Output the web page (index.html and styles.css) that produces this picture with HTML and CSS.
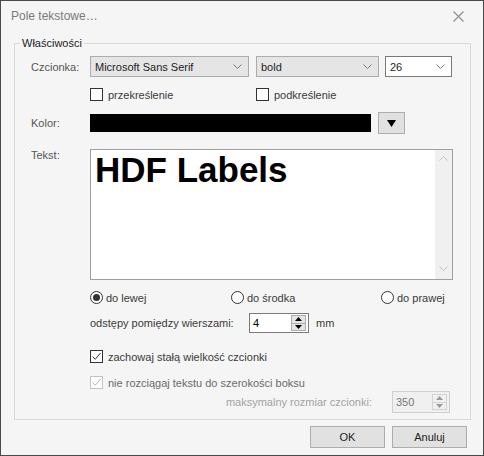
FILE: index.html
```html
<!DOCTYPE html>
<html lang="pl">
<head>
    <meta charset="UTF-8">
    <title>Pole tekstowe</title>
    <link rel="stylesheet" href="styles.css">
</head>
<body>
    <div class="dialog">
        <div class="titlebar">
            <span class="title">Pole tekstowe…</span>
            <svg class="close" width="11" height="11" viewBox="0 0 11 11">
                <path d="M0.5 0.5L10.5 10.5M10.5 0.5L0.5 10.5" stroke="#8c8c8c" stroke-width="1.1" fill="none"/>
            </svg>
        </div>

        <fieldset class="group">
            <legend>Właściwości</legend>

            <div class="row rowFont">
                <span class="label">Czcionka:</span>
                <div class="combo comboFamily">
                    <span>Microsoft Sans Serif</span>
                    <svg width="9" height="5" viewBox="0 0 9 5"><path d="M0.5 0.5L4.5 4.5L8.5 0.5" stroke="#7a7a7a" fill="none"/></svg>
                </div>
                <div class="combo comboStyle">
                    <span>bold</span>
                    <svg width="9" height="5" viewBox="0 0 9 5"><path d="M0.5 0.5L4.5 4.5L8.5 0.5" stroke="#7a7a7a" fill="none"/></svg>
                </div>
                <div class="combo comboSize">
                    <span>26</span>
                    <svg width="9" height="5" viewBox="0 0 9 5"><path d="M0.5 0.5L4.5 4.5L8.5 0.5" stroke="#7a7a7a" fill="none"/></svg>
                </div>
            </div>

            <div class="row rowDecor indent">
                <label class="check strike"><span class="box"></span>przekreślenie</label>
                <label class="check"><span class="box"></span>podkreślenie</label>
            </div>

            <div class="row rowColor">
                <span class="label">Kolor:</span>
                <div class="swatch"></div>
                <div class="colorBtn">
                    <svg width="9" height="7" viewBox="0 0 9 7"><path d="M0 0H9L4.5 7Z" fill="#000"/></svg>
                </div>
            </div>

            <div class="row rowText">
                <span class="label">Tekst:</span>
                <div class="textbox">
                    <div class="textContent">HDF Labels</div>
                    <div class="scrollbar">
                        <svg width="9" height="5" viewBox="0 0 9 5"><path d="M0.5 4.5L4.5 0.5L8.5 4.5" stroke="#c4c4c4" fill="none"/></svg>
                        <svg width="9" height="5" viewBox="0 0 9 5"><path d="M0.5 0.5L4.5 4.5L8.5 0.5" stroke="#c4c4c4" fill="none"/></svg>
                    </div>
                </div>
            </div>

            <div class="row rowAlign indent">
                <label class="option left"><span class="radio checked"></span>do lewej</label>
                <label class="option center"><span class="radio"></span>do środka</label>
                <label class="option"><span class="radio"></span>do prawej</label>
            </div>

            <div class="row rowSpacing indent">
                <span class="spacingLabel">odstępy pomiędzy wierszami:</span>
                <div class="spin">
                    <span>4</span>
                    <span class="spinBtns">
                        <span class="spinBtn"><svg width="7" height="4" viewBox="0 0 7 4"><path d="M0 4H7L3.5 0Z" fill="#000"/></svg></span>
                        <span class="spinBtn"><svg width="7" height="4" viewBox="0 0 7 4"><path d="M0 0H7L3.5 4Z" fill="#000"/></svg></span>
                    </span>
                </div>
                <span class="unit">mm</span>
            </div>

            <div class="row rowKeep indent">
                <label class="check">
                    <span class="box">
                        <svg width="11" height="11" viewBox="0 0 11 11"><path d="M1.5 5.5L4.2 8.3L9.5 2" stroke="#333" stroke-width="1" fill="none"/></svg>
                    </span>zachowaj stałą wielkość czcionki
                </label>
            </div>

            <div class="row rowStretch indent">
                <label class="check disabled">
                    <span class="box">
                        <svg width="11" height="11" viewBox="0 0 11 11"><path d="M1.5 5.5L4.2 8.3L9.5 2" stroke="#b5b5b5" stroke-width="1" fill="none"/></svg>
                    </span>nie rozciągaj tekstu do szerokości boksu
                </label>
            </div>

            <div class="row rowMax">
                <span class="maxLabel">maksymalny rozmiar czcionki:</span>
                <div class="spin spinDisabled">
                    <span>350</span>
                    <span class="spinBtns">
                        <span class="spinBtn"><svg width="7" height="4" viewBox="0 0 7 4"><path d="M0 4H7L3.5 0Z" fill="#9a9a9a"/></svg></span>
                        <span class="spinBtn"><svg width="7" height="4" viewBox="0 0 7 4"><path d="M0 0H7L3.5 4Z" fill="#9a9a9a"/></svg></span>
                    </span>
                </div>
            </div>
        </fieldset>

        <div class="actions">
            <button>OK</button>
            <button>Anuluj</button>
        </div>
    </div>
</body>
</html>
```

FILE: styles.css
```css
* {
    box-sizing: border-box;
}

body {
    margin: 0;
    font-family: "Liberation Sans", Arial, sans-serif;
    font-size: 11px;
    color: #3a3a3a;
}

.dialog {
    width: 484px;
    height: 456px;
    border: 1px solid #4a4a4a;
    background-color: #f5f5f5;
    display: flex;
    flex-direction: column;
}

.titlebar {
    height: 30px;
    display: flex;
    align-items: center;
    justify-content: space-between;
    padding: 0 19px 0 10px;
}

.title {
    font-size: 12px;
    color: #7a7a7a;
}

.group {
    margin: 5px 12px 0 13px;
    padding: 6px 17px 6px 16px;
    border: 1px solid #d9d9d9;
    min-width: 0;
}

.group legend {
    padding: 0 2px;
    margin-left: -11px;
    line-height: 14px;
    color: #222;
}

.row {
    display: flex;
    align-items: center;
}

.indent {
    padding-left: 59px;
}

.label {
    width: 59px;
    flex: none;
    color: #555;
}

/* font row */
.rowFont {
    height: 21px;
}

.combo {
    height: 21px;
    border: 1px solid #acacac;
    background-color: #e5e5e5;
    display: flex;
    align-items: center;
    justify-content: space-between;
    padding: 0 6px 0 4px;
    color: #1e1e1e;
}

.comboFamily {
    width: 159px;
    margin-right: 7px;
}

.comboStyle {
    width: 123px;
    margin-right: 6px;
}

.comboSize {
    width: 67px;
    background-color: #fff;
    border-color: #7a7a7a;
}

/* checkboxes */
.check {
    display: flex;
    align-items: center;
    gap: 5px;
    height: 13px;
}

.box {
    width: 13px;
    height: 13px;
    flex: none;
    border: 1px solid #333;
    background-color: #fff;
    display: flex;
}

.rowDecor {
    margin-top: 11px;
}

.strike {
    width: 166px;
}

.disabled {
    color: #6a6a6a;
}

.disabled .box {
    border-color: #c4c4c4;
}

/* colour row */
.rowColor {
    margin-top: 11px;
    height: 22px;
}

.swatch {
    width: 281px;
    height: 18px;
    background-color: #000;
}

.colorBtn {
    width: 27px;
    height: 22px;
    margin-left: 7px;
    background-color: #e1e1e1;
    border: 1px solid #adadad;
    display: flex;
    align-items: center;
    justify-content: center;
}

/* text box */
.rowText {
    margin-top: 15px;
    align-items: flex-start;
}

.rowText .label {
    line-height: 13px;
}

.textbox {
    width: 363px;
    height: 131px;
    border: 1px solid #a0a0a0;
    background-color: #fff;
    display: flex;
}

.textContent {
    flex: 1;
    padding: 0 4px;
    font-family: "Liberation Sans", Arial, sans-serif;
    font-weight: bold;
    font-size: 35px;
    line-height: 40px;
    color: #000;
}

.scrollbar {
    width: 17px;
    background-color: #f0f0f0;
    display: flex;
    flex-direction: column;
    justify-content: space-between;
    align-items: center;
    padding: 6px 0 8px;
}

/* alignment radios */
.rowAlign {
    margin-top: 11px;
    height: 13px;
}

.option {
    display: flex;
    align-items: center;
    gap: 3px;
}

.option.left {
    width: 141px;
}

.option.center {
    width: 150px;
}

.radio {
    width: 13px;
    height: 13px;
    border-radius: 50%;
    border: 1px solid #333;
    background-color: #fff;
    padding: 2px;
}

.radio.checked::after {
    content: "";
    display: block;
    width: 7px;
    height: 7px;
    border-radius: 50%;
    background-color: #333;
}

/* line spacing */
.rowSpacing {
    margin-top: 9px;
    height: 20px;
}

.spacingLabel {
    width: 159px;
}

.spin {
    width: 60px;
    height: 20px;
    border: 1px solid #7a7a7a;
    background-color: #fff;
    display: flex;
    align-items: center;
    justify-content: space-between;
    padding: 0 2px 0 3px;
    color: #000;
}

.spinBtns {
    width: 15px;
    height: 16px;
    border: 1px solid #acacac;
    display: flex;
    flex-direction: column;
}

.spinBtn {
    flex: 1;
    background-color: #e5e5e5;
    display: flex;
    align-items: center;
    justify-content: center;
}

.spinBtn + .spinBtn {
    border-top: 1px solid #acacac;
}

.unit {
    margin-left: 7px;
}

.rowKeep {
    margin-top: 17px;
}

.rowStretch {
    margin-top: 13px;
}

/* max size */
.rowMax {
    margin-top: 2px;
    height: 22px;
    justify-content: flex-end;
}

.maxLabel {
    color: #a3a3a3;
    margin-right: 20px;
}

.spinDisabled {
    width: 58px;
    height: 22px;
    margin-right: 3px;
    border-color: #cfcfcf;
    background-color: #f0f0f0;
    color: #777;
}

.spinDisabled .spinBtns {
    border-color: #d4d4d4;
}

.spinDisabled .spinBtn {
    background-color: #f0f0f0;
}

.spinDisabled .spinBtn + .spinBtn {
    border-top-color: #d4d4d4;
}

/* buttons */
.actions {
    display: flex;
    justify-content: flex-end;
    gap: 7px;
    margin-top: 6px;
    padding-right: 16px;
}

.actions button {
    width: 75px;
    height: 22px;
    background-color: #e1e1e1;
    border: 1px solid #adadad;
    font-family: "Liberation Sans", Arial, sans-serif;
    font-size: 11px;
    color: #222;
    padding: 0;
}
```
